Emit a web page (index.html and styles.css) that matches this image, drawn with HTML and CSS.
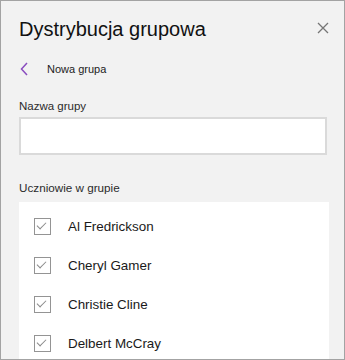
FILE: index.html
```html
<!DOCTYPE html>
<html lang="pl">
<head>
  <meta charset="UTF-8" />
  <title>Dystrybucja grupowa</title>
  <link rel="stylesheet" href="styles.css">
</head>
<body>
  <div id="panel">

    <div class="panel-header">
      <h1>Dystrybucja grupowa</h1>
      <button class="close-btn" aria-label="Zamknij">
        <svg width="12" height="12" viewBox="0 0 12 12">
          <path d="M1 1 L11 11 M11 1 L1 11" stroke="#767676" stroke-width="1.3" fill="none"/>
        </svg>
      </button>
    </div>

    <div class="back-row">
      <svg class="back-icon" width="8" height="14" viewBox="0 0 8 14">
        <path d="M7 1 L1.5 7 L7 13" stroke="#8a4dbf" stroke-width="1.5" fill="none"/>
      </svg>
      <span>Nowa grupa</span>
    </div>

    <label class="field-label" for="group-name">Nazwa grupy</label>
    <input id="group-name" class="text-input" type="text">

    <div class="field-label list-label">Uczniowie w grupie</div>
    <ul class="student-list">
      <li><span class="check"></span>Al Fredrickson</li>
      <li><span class="check"></span>Cheryl Gamer</li>
      <li><span class="check"></span>Christie Cline</li>
      <li><span class="check"></span>Delbert McCray</li>
    </ul>
  </div>
</body>
</html>
```

FILE: styles.css
```css
html, body {
  margin: 0;
  padding: 0;
  height: 100%;
  font-family: 'Liberation Sans', Arial, sans-serif;
  color: #1b1b1b;
  overflow: hidden;
}

#panel {
  box-sizing: border-box;
  height: 360px;
  border: 1px solid #a3a3a3;
  background: #f2f2f2;
  padding: 16px 0 0 18px;
  overflow: hidden;
}

.panel-header {
  display: flex;
  justify-content: space-between;
  align-items: center;
  padding-right: 15px;
}

.panel-header h1 {
  margin: 0;
  font-size: 20px;
  font-weight: normal;
  line-height: 24px;
  color: #111;
}

.close-btn {
  border: none;
  background: none;
  padding: 0;
  width: 12px;
  height: 12px;
  margin-top: -3px;
  cursor: pointer;
}

.close-btn svg {
  display: block;
}

.back-row {
  display: flex;
  align-items: center;
  height: 14px;
  margin-top: 21px;
  padding-left: 1px;
  font-size: 11px;
  color: #222;
}

.back-icon {
  margin-right: 19px;
}

.field-label {
  display: block;
  margin-top: 22px;
  font-size: 11.5px;
  line-height: 16px;
  color: #2b2b2b;
}

.text-input {
  display: block;
  box-sizing: border-box;
  width: 308px;
  height: 38px;
  margin-top: 3px;
  border: 2px solid #dadada;
  background: #fff;
  outline: none;
}

.list-label {
  margin-top: 25px;
  font-size: 11.7px;
}

.student-list {
  list-style: none;
  margin: 6px 0 0;
  padding: 5px 0 0 15px;
  width: 310px;
  box-sizing: border-box;
  background: #fff;
}

.student-list li {
  display: flex;
  align-items: center;
  height: 39px;
  font-size: 13.4px;
  color: #1a1a1a;
}

.check {
  box-sizing: border-box;
  width: 17px;
  height: 17px;
  margin-right: 17px;
  border: 1.5px solid #949494;
  position: relative;
}

.check::after {
  content: "";
  position: absolute;
  left: 4px;
  top: 1px;
  width: 4px;
  height: 8px;
  border: solid #8a8a8a;
  border-width: 0 1.3px 1.3px 0;
  transform: rotate(45deg);
}
```
